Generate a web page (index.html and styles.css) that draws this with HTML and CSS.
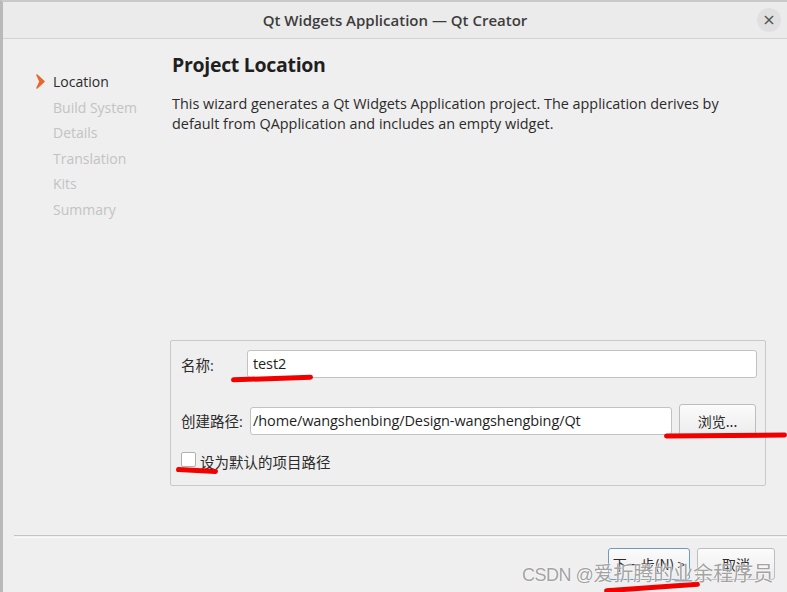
FILE: index.html
```html
<!DOCTYPE html>
<html>
<head>
<meta charset="utf-8">
<link rel="stylesheet" href="styles.css">
</head>
<body>
<div class="window">
  <div class="titlebar">
    <span></span>
    <span class="title">Qt Widgets Application — Qt Creator</span>
    <span class="close">×</span>
  </div>
  <div class="main">
    <ul class="steps">
      <li class="active"><svg class="arrow" width="10" height="15" viewBox="0 0 10 15"><path d="M1 1 L8 7.5 L1 14 L4 7.5 Z" fill="#e8672e" stroke="#e8672e" stroke-width="1.6" stroke-linejoin="round"/></svg>Location</li>
      <li>Build System</li>
      <li>Details</li>
      <li>Translation</li>
      <li>Kits</li>
      <li>Summary</li>
    </ul>
    <div class="content">
      <h1>Project Location</h1>
      <p class="desc">This wizard generates a Qt Widgets Application project. The application derives by default from QApplication and includes an empty widget.</p>
      <div class="group">
        <div class="row name-row">
          <label class="lbl name-lbl">名称:</label>
          <div class="input">test2</div>
        </div>
        <div class="row path-row">
          <label class="lbl path-lbl">创建路径:</label>
          <div class="input path-input">/home/wangshenbing/Design-wangshengbing/Qt</div>
          <button class="btn browse">浏览...</button>
        </div>
        <div class="row check-row">
          <span class="checkbox"></span>
          <span class="check-lbl">设为默认的项目路径</span>
        </div>
      </div>
    </div>
  </div>
  <div class="footer">
    <div class="sep"></div>
    <div class="buttons">
      <button class="btn next">下一步(N) &gt;</button>
      <button class="btn cancel">取消</button>
    </div>
  </div>
  <div class="mark m1"></div>
  <div class="mark m2"></div>
  <div class="mark m3"></div>
  <div class="mark m4"></div>
  <div class="watermark"><span class="wm-latin">CSDN @</span>爱折腾的业余程序员</div>
</div>
</body>
</html>
```
FILE: styles.css
```css
html, body {
  margin: 0;
  padding: 0;
}
body {
  width: 787px;
  height: 592px;
  overflow: hidden;
  background: #efefef;
  font-family: "Open Sans", "Noto Sans CJK SC", sans-serif;
  color: #2b2b2b;
}
.window {
  position: relative;
  width: 784px;
  height: 590px;
  border-left: 3px solid #b9b9b9;
  border-top: 2px solid #c9c9c9;
  background: #efefef;
}
.titlebar {
  height: 36px;
  display: grid;
  grid-template-columns: 1fr auto 1fr;
  align-items: center;
  background: #ebebeb;
  border-bottom: 1px solid #d3d3d3;
}
.title {
  font-weight: 600;
  font-size: 15px;
  color: #3c3c3c;
  letter-spacing: 0;
}
.close {
  justify-self: end;
  margin-right: 6px;
  width: 24px;
  height: 24px;
  border-radius: 50%;
  background: #e0e0e0;
  color: #555;
  font-size: 16px;
  line-height: 23px;
  text-align: center;
  font-family: "DejaVu Sans", sans-serif;
}
.main {
  display: flex;
  height: 496px;
}
.steps {
  list-style: none;
  margin: 0;
  padding: 30px 0 0 0;
  width: 167px;
  flex: none;
}
.steps li {
  height: 25.5px;
  line-height: 25.5px;
  font-size: 14px;
  color: #c3c3c3;
  padding-left: 50px;
  display: flex;
  align-items: center;
}
.steps li.active {
  color: #2a2a2a;
  padding-left: 33px;
}
.arrow {
  margin-right: 7px;
}
.content {
  flex: 1;
  display: flex;
  flex-direction: column;
}
h1 {
  margin: 14px 0 0 2px;
  font-size: 19.5px;
  line-height: 24px;
  font-weight: 700;
  color: #1f1f1f;
  letter-spacing: -0.3px;
}
.desc {
  margin: 17px 0 0 2px;
  font-size: 14.4px;
  line-height: 20px;
  width: 580px;
  color: #2b2b2b;
  letter-spacing: 0;
}
.group {
  margin-top: auto;
  margin-bottom: 49px;
  width: 594px;
  height: 144px;
  border: 1px solid #c9c9c9;
  border-radius: 2px;
  box-sizing: content-box;
  display: flex;
  flex-direction: column;
}
.row {
  display: flex;
  align-items: center;
}
.name-row {
  margin-top: 9px;
  padding-left: 10px;
}
.lbl {
  font-size: 14.5px;
  color: #2b2b2b;
}
.name-lbl { width: 66px; }
.path-lbl { width: 69px; }
.input {
  box-sizing: border-box;
  height: 28px;
  width: 510px;
  background: #fff;
  border: 1px solid #c2c2c2;
  border-radius: 3px;
  padding-left: 5px;
  font-size: 14.5px;
  line-height: 26px;
  color: #1f1f1f;
  letter-spacing: -0.1px;
}
.path-row {
  margin-top: 26px;
  padding-left: 10px;
}
.path-input {
  width: 422px;
  padding-left: 2px;
}
.btn {
  box-sizing: border-box;
  font-family: "Noto Sans CJK SC", sans-serif;
  font-size: 14px;
  color: #2b2b2b;
  background: linear-gradient(#fbfbfb, #ececec);
  border: 1px solid #bdbdbd;
  border-radius: 3px;
  padding: 0;
}
.browse {
  margin-left: 7px;
  width: 77px;
  height: 33px;
}
.check-row {
  margin-top: 10px;
  padding-left: 10px;
}
.checkbox {
  box-sizing: border-box;
  width: 15px;
  height: 15px;
  background: #fff;
  border: 1px solid #b0b0b0;
  border-radius: 2px;
}
.check-lbl {
  margin-left: 4px;
  font-size: 14.5px;
  font-family: "Noto Sans CJK SC", sans-serif;
  margin-top: 4px;
}
.footer {
  display: flex;
  flex-direction: column;
}
.sep {
  margin-left: 11px;
  height: 1px;
  border-top: 1px solid #c4c4c4;
  border-bottom: 1px solid #fafafa;
}
.buttons {
  display: flex;
  justify-content: flex-end;
  gap: 7px;
  padding: 10px 12px 0 0;
}
.next {
  width: 82px;
  height: 32px;
  border-color: #6c9ac3;
}
.cancel {
  width: 78px;
  height: 32px;
}
.mark {
  position: absolute;
  height: 5px;
  background: #f20000;
  border-radius: 3px;
}
.m1 { left: 228px; top: 374px; width: 82px; transform: rotate(-2deg); }
.m2 { left: 661px; top: 431px; width: 123px; transform: rotate(-0.5deg); }
.m3 { left: 173px; top: 466px; width: 42px; transform: rotate(3deg); }
.m4 { left: 601px; top: 583px; width: 96px; transform: rotate(-4deg); }
.watermark {
  position: absolute;
  left: 519px;
  top: 558px;
  font-family: "Noto Sans CJK SC", sans-serif;
  font-size: 20px;
  line-height: 26px;
  color: rgba(150,150,150,0.9);
  text-shadow: 0 0 2px #fff, 0 0 1px #fff;
  white-space: nowrap;
}
.wm-latin {
  font-family: "Liberation Sans", sans-serif;
  font-size: 18px;
  letter-spacing: -0.5px;
}
```
